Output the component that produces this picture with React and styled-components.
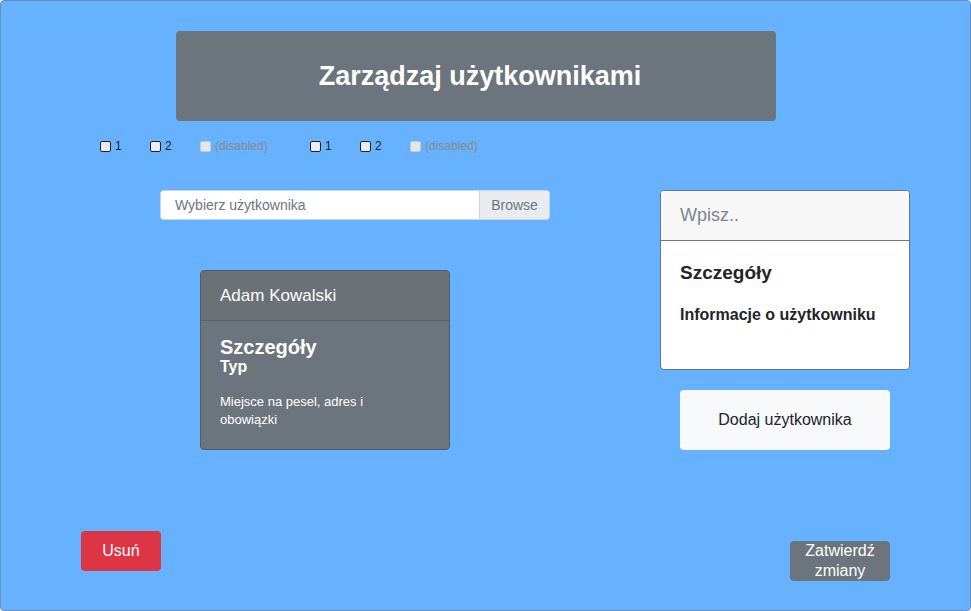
import styled, { createGlobalStyle } from "styled-components";

const GlobalStyle = createGlobalStyle`
  html, body {
    margin: 0;
    padding: 0;
    background: #ffffff;
  }
  body {
    font-family: "Liberation Sans", Arial, sans-serif;
  }
  * {
    box-sizing: border-box;
  }
`;

const Panel = styled.div`
  width: 971px;
  height: 611px;
  background: #66b2ff;
  border: 1px solid #6c8ebf;
  border-radius: 4px;
  padding: 30px 80px 0 80px;
  display: flex;
  flex-direction: column;
`;

const TitleBox = styled.div`
  width: 600px;
  height: 90px;
  margin-left: 95px;
  background: #6c757d;
  border-radius: 4px;
  display: flex;
  align-items: center;
  justify-content: center;
  padding-left: 8px;

  h1 {
    margin: 0;
    color: #ffffff;
    font-size: 27px;
    font-weight: bold;
  }
`;

const CheckRow = styled.div`
  display: flex;
  align-items: center;
  margin-top: 18px;
  margin-left: 19px;
  height: 14px;
`;

const CheckGroup = styled.div`
  width: 210px;
  display: flex;
  align-items: center;
`;

const CheckItem = styled.label`
  display: flex;
  align-items: center;
  width: ${(p) => (p.disabled ? "auto" : "50px")};
  font-size: 12px;
  color: ${(p) => (p.disabled ? "#8a8a8a" : "#222222")};

  input {
    appearance: none;
    width: 11px;
    height: 11px;
    margin: 0 4px 0 0;
    border: 1px solid ${(p) => (p.disabled ? "#c8c8c8" : "#222222")};
    border-radius: 2px;
    background: ${(p) => (p.disabled ? "#e6e6e6" : "#ececec")};
  }
`;

const Main = styled.div`
  display: flex;
  align-items: flex-start;
  margin-top: 37px;
  margin-left: 79px;
`;

const LeftColumn = styled.div`
  width: 390px;
  flex-shrink: 0;
  display: flex;
  flex-direction: column;
`;

const RightColumn = styled.div`
  margin-left: 110px;
  width: 250px;
  flex-shrink: 0;
  display: flex;
  flex-direction: column;
`;

const InputGroup = styled.div`
  display: flex;
  height: 30px;
  border: 1px solid #ced4da;
  border-radius: 4px;
  overflow: hidden;
  background: #ffffff;

  input {
    flex: 1;
    min-width: 0;
    border: none;
    outline: none;
    padding: 0 14px;
    font-family: inherit;
    font-size: 14px;
    color: #495057;
    background: #ffffff;
  }
  input::placeholder {
    color: #6c757d;
  }
  span {
    width: 70px;
    display: flex;
    align-items: center;
    justify-content: center;
    background: #e9ecef;
    border-left: 1px solid #ced4da;
    color: #6c757d;
    font-size: 14px;
  }
`;

const Card = styled.div`
  width: 250px;
  height: 180px;
  border-radius: 4px;
  overflow: hidden;
  border: 1px solid ${(p) => (p.dark ? "#555c62" : "#6c757d")};
  background: ${(p) => (p.dark ? "#6c757d" : "#ffffff")};
  color: ${(p) => (p.dark ? "#ffffff" : "#212529")};
  margin-top: ${(p) => p.offsetTop || 0}px;
  margin-left: ${(p) => p.offsetLeft || 0}px;
`;

const CardHeader = styled.div`
  height: 50px;
  display: flex;
  align-items: center;
  padding: 0 19px;
  border-bottom: 1px solid ${(p) => (p.dark ? "#596066" : "#6c757d")};
  background: ${(p) => (p.dark ? "#6a7177" : "#f7f7f7")};
  color: ${(p) => (p.dark ? "#ffffff" : "#7d858c")};
  font-size: ${(p) => (p.dark ? "17px" : "18px")};
`;

const CardBody = styled.div`
  padding: ${(p) => (p.dark ? "14px 19px" : "20px 19px")};

  h5 {
    margin: 0;
    font-size: ${(p) => (p.dark ? "20px" : "19px")};
    font-weight: bold;
    line-height: 24px;
  }
  h6 {
    margin: ${(p) => (p.dark ? "-2px 0 0 0" : "20px 0 0 0")};
    font-size: 16px;
    font-weight: bold;
    line-height: 20px;
  }
  p {
    margin: 16px 0 0 0;
    font-size: 13px;
    line-height: 18px;
    width: 200px;
  }
`;

const AddButton = styled.button`
  width: 210px;
  height: 60px;
  margin: 20px 0 0 20px;
  border: none;
  border-radius: 4px;
  background: #f8f9fa;
  color: #212529;
  font-family: inherit;
  font-size: 16px;
`;

const Footer = styled.div`
  display: flex;
  justify-content: space-between;
  align-items: flex-start;
  margin-top: 81px;
`;

const ActionButton = styled.button`
  width: ${(p) => p.w}px;
  height: 40px;
  margin-top: ${(p) => p.offsetTop || 0}px;
  border: none;
  border-radius: 4px;
  background: ${(p) => p.bg};
  color: #ffffff;
  font-family: inherit;
  font-size: 16px;
  line-height: 20px;
  padding: 0;
`;

function CheckSet() {
  return (
    <CheckGroup>
      <CheckItem>
        <input type="checkbox" />1
      </CheckItem>
      <CheckItem>
        <input type="checkbox" />2
      </CheckItem>
      <CheckItem disabled>
        <input type="checkbox" disabled />
        (disabled)
      </CheckItem>
    </CheckGroup>
  );
}

export default function App() {
  return (
    <>
      <GlobalStyle />
      <Panel>
        <TitleBox>
          <h1>Zarządzaj użytkownikami</h1>
        </TitleBox>
        <CheckRow>
          <CheckSet />
          <CheckSet />
        </CheckRow>
        <Main>
          <LeftColumn>
            <InputGroup>
              <input placeholder="Wybierz użytkownika" />
              <span>Browse</span>
            </InputGroup>
            <Card dark offsetTop={50} offsetLeft={40}>
              <CardHeader dark>Adam Kowalski</CardHeader>
              <CardBody dark>
                <h5>Szczegóły</h5>
                <h6>Typ</h6>
                <p>Miejsce na pesel, adres i obowiązki</p>
              </CardBody>
            </Card>
          </LeftColumn>
          <RightColumn>
            <Card>
              <CardHeader>Wpisz..</CardHeader>
              <CardBody>
                <h5>Szczegóły</h5>
                <h6>Informacje o użytkowniku</h6>
              </CardBody>
            </Card>
            <AddButton>Dodaj użytkownika</AddButton>
          </RightColumn>
        </Main>
        <Footer>
          <ActionButton w={80} bg="#dc3545">
            Usuń
          </ActionButton>
          <ActionButton w={100} bg="#6c757d" offsetTop={10}>
            Zatwierdź
            <br />
            zmiany
          </ActionButton>
        </Footer>
      </Panel>
    </>
  );
}
